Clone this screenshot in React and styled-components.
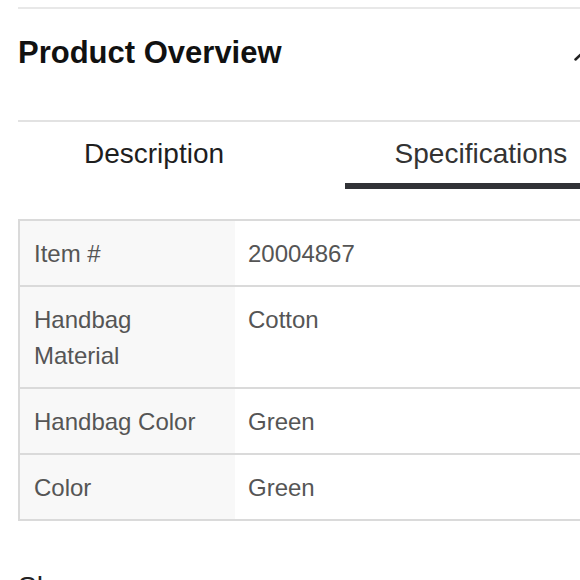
import React from "react";
import styled, { createGlobalStyle } from "styled-components";

const Global = createGlobalStyle`
  html, body {
    margin: 0;
    padding: 0;
    background: #ffffff;
    overflow: hidden;
    width: 580px;
    height: 580px;
  }
  body {
    font-family: "Liberation Sans", Arial, Helvetica, sans-serif;
  }
`;

const Page = styled.div`
  width: 600px;
  margin-left: 18px;
  padding-top: 7px;
`;

const Header = styled.div`
  display: flex;
  align-items: center;
  justify-content: space-between;
  border-top: 2px solid #e8e8e8;
  border-bottom: 2px solid #e2e2e2;
  padding: 26px 0 49px;
`;

const Title = styled.h2`
  margin: 0;
  font-size: 31px;
  line-height: 36px;
  font-weight: 700;
  color: #111;
`;

const Chevron = styled.svg`
  width: 22px;
  height: 12px;
  margin-right: 22px;
  margin-top: 4px;
`;

const Tabs = styled.div`
  display: flex;
  gap: 55px;
`;

const Tab = styled.div`
  width: 272px;
  text-align: center;
  font-size: 28px;
  line-height: 34px;
  padding: 15px 0 12px;
  color: ${(p) => (p.$active ? "#333" : "#1e1e1e")};
  border-bottom: 6px solid ${(p) => (p.$active ? "#313236" : "transparent")};
`;

const Table = styled.div`
  margin-top: 30px;
  border: 2px solid #dadada;
  border-right: none;
`;

const Row = styled.div`
  display: flex;
  & + & {
    border-top: 2px solid #dadada;
  }
`;

const Label = styled.div`
  width: 215px;
  box-sizing: border-box;
  padding: 15px 21px 13px 14px;
  background: #f8f8f8;
  font-size: 24px;
  line-height: 36px;
  color: #555;
`;

const Value = styled.div`
  flex: 1;
  padding: 15px 13px 13px;
  font-size: 24px;
  line-height: 36px;
  color: #555;
`;

const SectionTitle = styled.div`
  margin-top: 49px;
  font-size: 28px;
  line-height: 34px;
  color: #222;
`;

const specs = [
  ["Item #", "20004867"],
  ["Handbag Material", "Cotton"],
  ["Handbag Color", "Green"],
  ["Color", "Green"],
];

export default function App() {
  return (
    <>
      <Global />
      <Page>
        <Header>
          <Title>Product Overview</Title>
          <Chevron viewBox="0 0 22 12" fill="none">
            <polyline
              points="1.5,10.5 11,1.5 20.5,10.5"
              stroke="#222"
              strokeWidth="2.5"
              strokeLinecap="round"
              strokeLinejoin="round"
            />
          </Chevron>
        </Header>
        <Tabs>
          <Tab>Description</Tab>
          <Tab $active>Specifications</Tab>
        </Tabs>
        <Table>
          {specs.map(([k, v]) => (
            <Row key={k}>
              <Label>{k}</Label>
              <Value>{v}</Value>
            </Row>
          ))}
        </Table>
        <SectionTitle>Share</SectionTitle>
      </Page>
    </>
  );
}
